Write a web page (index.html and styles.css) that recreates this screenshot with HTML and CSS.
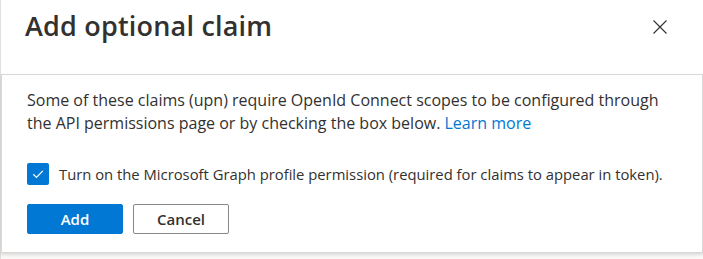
FILE: index.html
```html
<!DOCTYPE html>
<html lang="en">
<head>
    <meta charset="UTF-8">
    <title>Add optional claim</title>
    <link rel="stylesheet" href="styles.css">
</head>
<body>
    <div class="panel">
        <div class="panel-header">
            <h1>Add optional claim</h1>
            <button type="button" class="close-btn" aria-label="Close">
                <svg width="16" height="16" viewBox="0 0 16 16">
                    <path d="M1.5 1.5 L14.5 14.5 M14.5 1.5 L1.5 14.5" stroke="#323130" stroke-width="1.1" fill="none"/>
                </svg>
            </button>
        </div>
        <div class="card">
            <p class="info">Some of these claims (upn) require OpenId Connect scopes to be configured through the API permissions page or by checking the box below. <a href="#">Learn more</a></p>
            <label class="check-row">
                <span class="check-box">
                    <svg width="14" height="14" viewBox="0 0 14 14">
                        <path d="M2.3 7.3 L5.5 10.4 L11.8 3.8" stroke="#fff" stroke-width="1.2" fill="none"/>
                    </svg>
                </span>
                <span>Turn on the Microsoft Graph profile permission (required for claims to appear in token).</span>
            </label>
            <div class="actions">
                <button type="button" class="btn primary">Add</button>
                <button type="button" class="btn">Cancel</button>
            </div>
        </div>
    </div>
</body>
</html>
```

FILE: styles.css
```css
body {
    margin: 0;
    padding: 0;
    font-family: "Open Sans", "Noto Sans", sans-serif;
    color: #323130;
    background-color: #fff;
}
.panel {
    width: 703px;
    height: 259px;
    box-sizing: border-box;
    border-left: 1px solid #e1dfdd;
    background-color: #faf9f8;
}
.panel-header {
    height: 74px;
    background-color: #fff;
    display: flex;
    justify-content: space-between;
    align-items: flex-start;
    padding: 0 35px 0 24px;
}
h1 {
    margin: 7px 0 0 0;
    font-size: 27px;
    font-weight: 600;
    letter-spacing: 0.2px;
    color: #323130;
}
.close-btn {
    background: none;
    border: none;
    padding: 0;
    margin-top: 19px;
    width: 16px;
    height: 16px;
    cursor: pointer;
}
.close-btn svg {
    display: block;
}
.card {
    background-color: #fff;
    border: 1px solid #d8d8d8;
    box-shadow: 0 2px 3px rgba(0, 0, 0, 0.12);
    height: 179px;
    box-sizing: border-box;
    padding: 14px 25px 0 25px;
}
.info {
    margin: 0;
    max-width: 640px;
    font-size: 16px;
    line-height: 23px;
    color: #323130;
}
.info a {
    color: #0078d4;
    text-decoration: none;
}
.check-row {
    display: flex;
    align-items: center;
    gap: 10px;
    margin-top: 28px;
    font-size: 14.8px;
}
.check-box {
    width: 22px;
    height: 22px;
    border-radius: 2px;
    background-color: #0078d4;
    display: flex;
    align-items: center;
    justify-content: center;
}
.actions {
    display: flex;
    gap: 10px;
    margin-top: 19px;
}
.btn {
    width: 96px;
    height: 30px;
    border: 1px solid #8a8886;
    border-radius: 2px;
    background-color: #fff;
    color: #323130;
    font-family: inherit;
    font-size: 15px;
    font-weight: 600;
    cursor: pointer;
}
.btn.primary {
    background-color: #0078d4;
    border-color: #0078d4;
    color: #fff;
}
```
